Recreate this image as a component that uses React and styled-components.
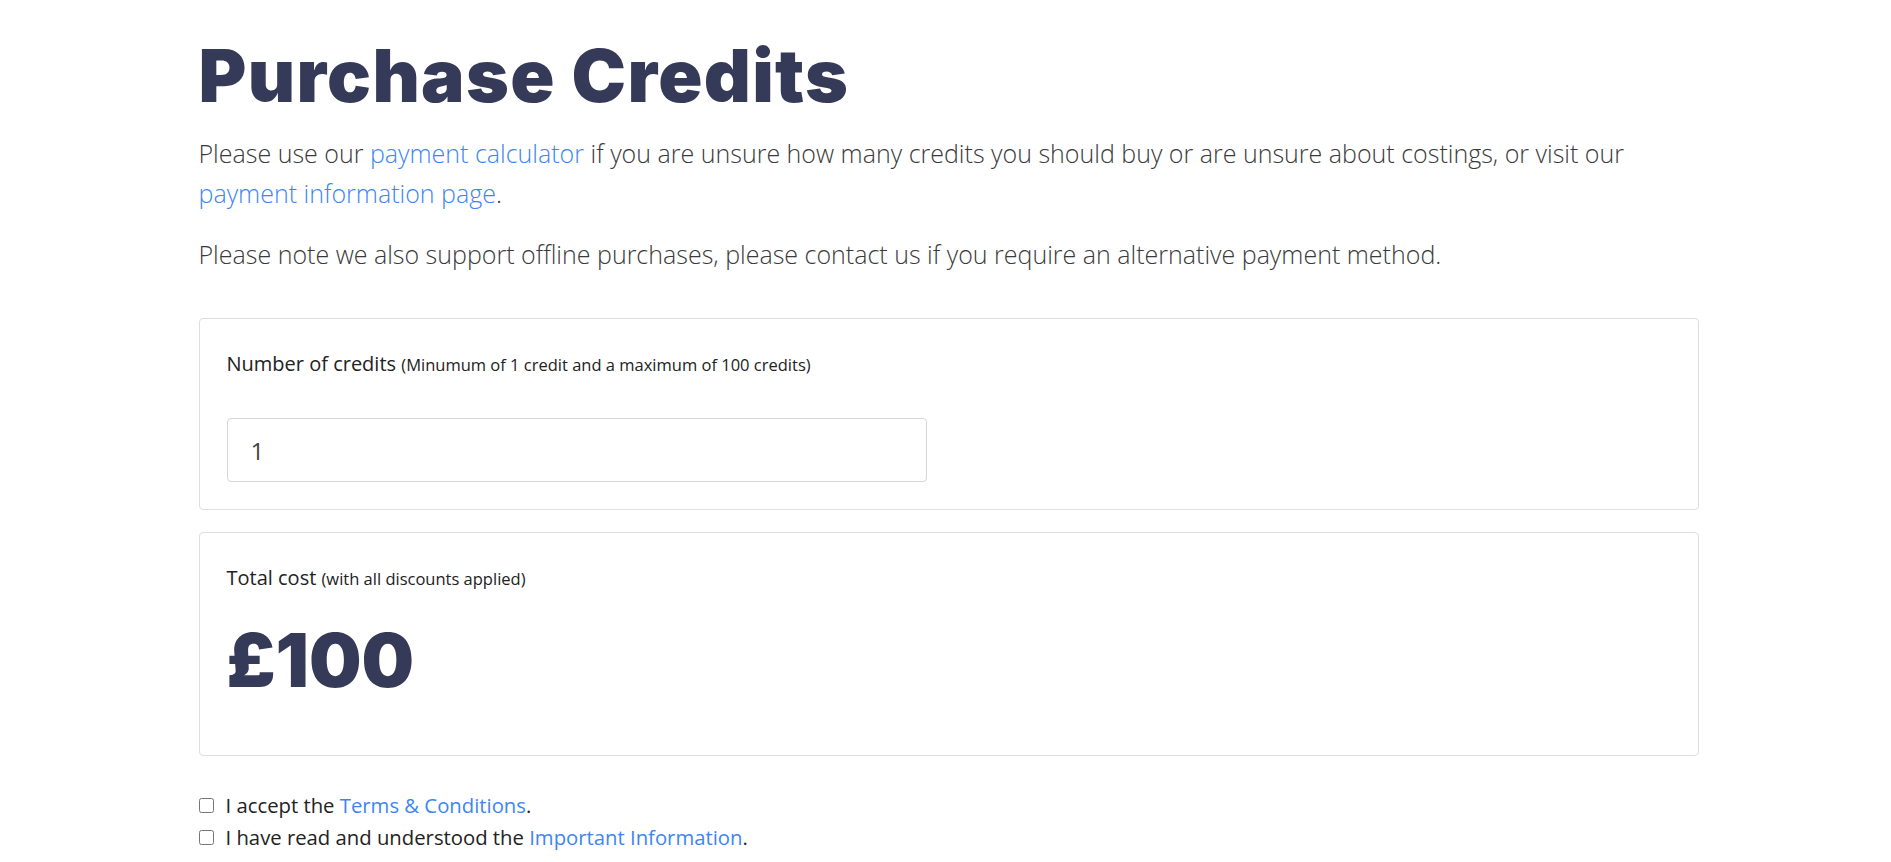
import React, { useState } from 'react';
import styled, { createGlobalStyle } from 'styled-components';

const GlobalStyle = createGlobalStyle`
  body {
    margin: 0;
    padding-left: 6px;
    background: #ffffff;
    font-family: "Open Sans", "Liberation Sans", sans-serif;
    color: #333;
  }
  * { box-sizing: border-box; }
`;

const App = () => {
  const [credits, setCredits] = useState('1');
  const [terms, setTerms] = useState(false);
  const [info, setInfo] = useState(false);

  const total = (parseInt(credits, 10) || 0) * 100;

  return (
    <Page>
      <GlobalStyle />
      <Title>Purchase Credits</Title>
      <Intro>
        Please use our <Link href="#">payment calculator</Link> if you are unsure how many credits you should buy or are unsure about costings, or visit our{' '}
        <Link href="#">payment information page</Link>.
      </Intro>
      <Intro $last>
        Please note we also support offline purchases, please contact us if you require an alternative payment method.
      </Intro>

      <Card>
        <Label>
          Number of credits <Hint>(Minumum of 1 credit and a maximum of 100 credits)</Hint>
        </Label>
        <Input
          type="text"
          value={credits}
          onChange={(e) => setCredits(e.target.value)}
        />
      </Card>

      <Card $total>
        <Label $gap="26px">
          Total cost <Hint>(with all discounts applied)</Hint>
        </Label>
        <Price>£{total}</Price>
      </Card>

      <Checks>
        <CheckRow>
          <Check type="checkbox" checked={terms} onChange={() => setTerms(!terms)} />
          <span>I accept the <Link href="#">Terms &amp; Conditions</Link>.</span>
        </CheckRow>
        <CheckRow>
          <Check type="checkbox" checked={info} onChange={() => setInfo(!info)} />
          <span>I have read and understood the <Link href="#">Important Information</Link>.</span>
        </CheckRow>
      </Checks>
    </Page>
  );
};

const Page = styled.div`
  width: 1500px;
  margin: 0 auto;
  padding-top: 36px;
`;

const Title = styled.h1`
  margin: 0 0 17px;
  font-family: Inter, "Liberation Sans", sans-serif;
  font-weight: 900;
  font-size: 73px;
  line-height: 80px;
  letter-spacing: 1.3px;
  color: #353a59;
`;

const Intro = styled.p`
  margin: 0 0 ${(p) => (p.$last ? '44px' : '21px')};
  font-family: "Open Sans", "Liberation Sans", sans-serif;
  font-weight: 300;
  font-size: 25px;
  line-height: 40px;
  color: #3a3a3a;
`;

const Link = styled.a`
  color: #3d85f5;
  text-decoration: none;
`;

const Card = styled.div`
  border: 1px solid #dedede;
  border-radius: 4px;
  padding: 27px 27px ${(p) => (p.$total ? '58px' : '27px')};
  margin-top: ${(p) => (p.$total ? '22px' : '0')};
`;

const Label = styled.div`
  font-size: 20px;
  line-height: 36px;
  color: #222;
  margin-bottom: ${(p) => p.$gap || '35px'};
`;

const Hint = styled.span`
  font-size: 16.5px;
`;

const Input = styled.input`
  display: block;
  width: 700px;
  height: 64px;
  padding: 0 23px;
  border: 1px solid #d3d6da;
  border-radius: 4px;
  font-family: "Open Sans", "Liberation Sans", sans-serif;
  font-size: 24px;
  color: #444;
  outline: none;
`;

const Price = styled.div`
  font-family: Inter, "Liberation Sans", sans-serif;
  font-weight: 900;
  font-size: 74px;
  line-height: 74px;
  color: #353a59;
`;

const Checks = styled.div`
  margin-top: 33px;
  display: flex;
  flex-direction: column;
`;

const CheckRow = styled.label`
  display: flex;
  align-items: center;
  gap: 12px;
  font-size: 20.3px;
  line-height: 32px;
  color: #222;
`;

const Check = styled.input`
  margin: 0;
  width: 15px;
  height: 15px;
`;

export default App;
